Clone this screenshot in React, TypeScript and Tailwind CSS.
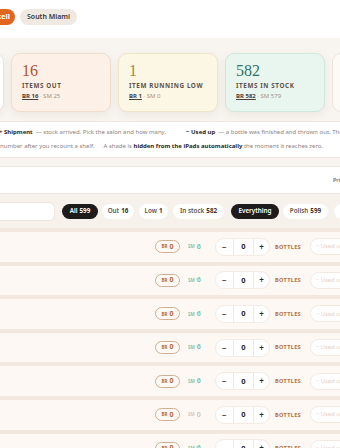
import clsx from "clsx";

const CARDS = [
  { num: "16", label: "ITEMS OUT", br: "BR 16", sm: "SM 25", bg: "bg-[#fdf1e7] border-[#f0ddcd]", color: "text-[#b3532f]" },
  { num: "1", label: "ITEM RUNNING LOW", br: "BR 1", sm: "SM 0", bg: "bg-[#fcf6e5] border-[#efe4c9]", color: "text-[#9c8c3d]" },
  { num: "582", label: "ITEMS IN STOCK", br: "BR 582", sm: "SM 579", bg: "bg-[#e9f6f0] border-[#d0e7dc]", color: "text-[#2f7566]" },
];

const FILTERS = [
  { label: "All", n: "599", w: "w-[36px]", dark: true, ml: "ml-[7px]" },
  { label: "Out", n: "16", w: "w-[32px]", ml: "ml-[4px]" },
  { label: "Low", n: "1", w: "w-[29px]", ml: "ml-[5px]" },
  { label: "In stock", n: "582", w: "w-[51px]", ml: "ml-[5px]" },
  { label: "Everything", n: "", w: "w-[48px]", dark: true, ml: "ml-[7px]" },
  { label: "Polish", n: "599", w: "w-[45px]", ml: "ml-[4px]" },
  { label: "Dip", n: "0", w: "w-[40px]", ml: "ml-[6px]" },
];

const ROWS = [6, 6, 6, 6, 6, 0, 6];

function Row({ sm }: { sm: number }) {
  return (
    <div className="border-t-[4px] border-[#f2e8df]">
      <div className="flex items-center h-[29.6px] bg-[#fdf8f3] pl-[155px] whitespace-nowrap">
        <div className="w-[25px] h-[13px] shrink-0 rounded-full border border-[#cfae93] bg-[#fffaf6] flex items-center justify-center gap-[2px] text-[#b4663d]">
          <span className="text-[4.5px] font-bold">BR</span>
          <span className="text-[7px] font-bold">0</span>
        </div>
        <div className={clsx("w-[16px] ml-[8px] shrink-0 flex items-center gap-[2px]", sm ? "text-[#76bba4]" : "text-[#d6c2b2]")}>
          <span className="text-[4.5px] font-semibold">SM</span>
          <span className="text-[7px] font-semibold">{sm}</span>
        </div>
        <div className="ml-[11px] w-[55px] h-[18px] shrink-0 rounded-full bg-white border border-[#f3ebe4] flex items-center text-[#2c2624]">
          <span className="w-[17px] text-center text-[8px] font-semibold">−</span>
          <span className="w-[22px] h-full border-x border-[#f1e8e0] flex items-center justify-center text-[7.5px] font-bold">0</span>
          <span className="w-[15px] text-center text-[8px] font-semibold">+</span>
        </div>
        <span className="ml-[5px] w-[30px] shrink-0 text-[5.6px] font-bold tracking-[0.3px] text-[#b76f40]">BOTTLES</span>
        <div className="ml-[5px] w-[44px] h-[17px] shrink-0 rounded-full bg-white border border-[#f4e9e0] flex items-center pl-[5px] text-[5.8px] text-[#e7cfbf]">
          − Used up
        </div>
      </div>
    </div>
  );
}

export default function App() {
  return (
    <div className="w-[340px] h-[448px] overflow-hidden bg-white text-[#2c2624]" style={{ fontFamily: '"Noto Sans", "Open Sans", sans-serif' }}>
      {/* Salon switcher */}
      <div className="h-[38px] flex items-center gap-[5px] pb-[4px]">
        <div className="ml-[-33px] w-[48px] h-[16px] rounded-full bg-[#e2661d] text-white text-[7.5px] font-bold flex items-center justify-end pr-[5px]">
          Brickell
        </div>
        <div className="w-[57px] h-[16px] rounded-full bg-[#efe9e2] text-[7px] font-semibold text-[#3b3431] flex items-center justify-center">
          South Miami
        </div>
      </div>

      {/* Stat cards */}
      <div className="h-[84px] bg-[#f8f4ef] border-b border-[#efe8e1] flex items-start pt-[15px] gap-[7px] whitespace-nowrap">
        <div className="ml-[-96px] w-[100px] h-[59px] shrink-0 rounded-[9px] bg-white border border-[#ece4dc] shadow-[0_3px_8px_rgba(120,90,60,0.08)]" />
        {CARDS.map(c => (
          <div key={c.label} className={clsx("w-[100px] h-[59px] shrink-0 rounded-[9px] border pl-[10px] pt-[8px] shadow-[0_3px_8px_rgba(120,90,60,0.08)]", c.bg)}>
            <p className={clsx("text-[16px] leading-[18px]", c.color)} style={{ fontFamily: '"Liberation Serif", "DejaVu Serif", serif' }}>{c.num}</p>
            <p className="mt-[2px] text-[6.3px] font-bold tracking-[0.6px] text-[#5d514a] leading-[8px]">{c.label}</p>
            <p className="mt-[2px] text-[6px] leading-[8px] text-[#9d928b]">
              <span className="font-bold text-[#4a403b] underline">{c.br}</span> · {c.sm}
            </p>
          </div>
        ))}
        <div className="w-[100px] h-[59px] shrink-0 rounded-[9px] bg-[#fdfaf6] border border-[#ece4dc]" />
      </div>

      {/* Help text */}
      <div className="h-[36px] bg-white border-b border-[#efe7e0] text-[6px] text-[#8d837d] whitespace-nowrap pt-[4px]">
        <div className="flex h-[13.5px] items-center">
          <span className="ml-[-1px] font-bold text-[#2b2624]">+ Shipment</span>
          <span className="ml-[3px]">— stock arrived. Pick the salon and how many.</span>
          <span className="ml-[20px] font-bold text-[#2b2624]">− Used up</span>
          <span className="ml-[3px]">— a bottle was finished and thrown out. The</span>
        </div>
        <div className="flex h-[13.5px] items-center">
          <span>number after you recount a shelf.</span>
          <span className="ml-[9px]">A shade is <b className="text-[#2b2624]">hidden from the iPads automatically</b> the moment it reaches zero.</span>
        </div>
      </div>

      <div className="h-[8px] bg-[#f8f4ef]" />

      {/* Toolbar */}
      <div className="h-[27px] bg-white border-t border-[#efe7e0] flex items-center justify-end">
        <span className="mr-[-6px] text-[5.5px] font-semibold text-[#7a716b]">Print</span>
      </div>

      {/* Filters */}
      <div className="h-[35px] bg-[#f6f1eb] border-t border-[#efe6dd] flex items-center whitespace-nowrap">
        <div className="ml-[-40px] w-[95px] h-[19px] shrink-0 rounded-[6px] bg-white border border-[#efe6dd]" />
        {FILTERS.map(f => (
          <div key={f.label} className={clsx("h-[15px] shrink-0 rounded-full flex items-center justify-center gap-[2px] text-[6.3px] font-semibold", f.w, f.ml,
            f.dark ? "bg-[#1f1b1a] text-white" : "bg-white text-[#5d5550]")}>
            <span>{f.label}</span>
            {f.n && <span className={f.dark ? "font-bold" : "font-bold text-[#3b3330]"}>{f.n}</span>}
          </div>
        ))}
      </div>

      {/* Inventory rows */}
      <div>
        {ROWS.map((sm, i) => <Row key={i} sm={sm} />)}
      </div>
    </div>
  );
}
